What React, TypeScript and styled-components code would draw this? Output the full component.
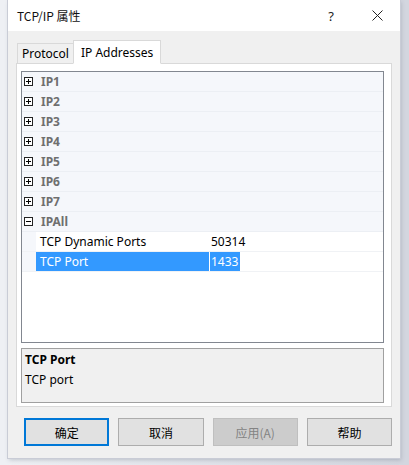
import React from "react";
import styled, { createGlobalStyle } from "styled-components";

const GlobalStyle = createGlobalStyle`
  html, body {
    margin: 0;
    padding: 0;
    background: #e4e6ed;
  }
  body {
    font-family: "Noto Sans", "Noto Sans CJK SC", sans-serif;
    font-size: 12px;
    color: #000;
  }
`;

const Page = styled.div`
  width: 409px;
  height: 465px;
  padding: 0 0 0 8px;
  box-sizing: border-box;
  background: linear-gradient(90deg, #eef0f4 0, #eef0f4 8px, #d3d6df 400px);
  overflow: hidden;
`;

const Window = styled.div`
  width: 392px;
  height: 458px;
  display: flex;
  flex-direction: column;
  background: #f0f0f0;
  box-shadow: 0 0 0 1px #c9ccd6, 1px 2px 4px rgba(60, 70, 90, 0.25);
`;

const TitleBar = styled.div`
  height: 31px;
  flex: none;
  display: flex;
  align-items: center;
  background: #fff;
  padding-left: 9px;
  font-size: 12px;
`;

const Title = styled.div`
  flex: 1;
  font-family: "Noto Sans CJK SC", "Noto Sans", sans-serif;
  color: #111;
`;

const CaptionButton = styled.div<{ $width: number }>`
  width: ${(p) => p.$width}px;
  height: 31px;
  display: flex;
  align-items: center;
  justify-content: center;
  font-size: 13px;
  color: #222;
`;

const Body = styled.div`
  flex: 1;
  display: flex;
  flex-direction: column;
  padding: 9px 8px 0 8px;
`;

const TabStrip = styled.div`
  height: 24px;
  display: flex;
  align-items: flex-end;
  padding-left: 1px;
  margin-bottom: -1px;
  position: relative;
  z-index: 1;
`;

const Tab = styled.div<{ $active?: boolean }>`
  height: ${(p) => (p.$active ? 24 : 21)}px;
  padding: 0 ${(p) => (p.$active ? 7 : 4)}px;
  display: flex;
  align-items: center;
  box-sizing: border-box;
  border: 1px solid #d9d9d9;
  border-bottom: ${(p) => (p.$active ? "1px solid #fff" : "1px solid #d9d9d9")};
  background: ${(p) => (p.$active ? "#fff" : "#f0f0f0")};
  margin-left: ${(p) => (p.$active ? "-1px" : "0")};
  color: #000;
`;

const Panel = styled.div`
  height: 344px;
  box-sizing: border-box;
  border: 1px solid #d9d9d9;
  background: #fff;
  padding: 7px 7px 3px 4px;
  display: flex;
  flex-direction: column;
`;

const Grid = styled.div`
  height: 272px;
  box-sizing: border-box;
  border: 1px solid #828790;
  background: #fff;
  overflow: hidden;
`;

const CategoryRow = styled.div`
  height: 20px;
  display: flex;
  align-items: center;
  background: #f5f7fb;
  border-bottom: 1px solid #eceff4;
  box-sizing: border-box;
`;

const Expander = styled.div`
  width: 17px;
  padding-left: 2px;
  display: flex;
  align-items: center;
`;

const CategoryName = styled.div`
  font-weight: bold;
  color: #6f6f6f;
  font-size: 12px;
`;

const PropRow = styled.div`
  height: 20px;
  display: flex;
  box-sizing: border-box;
  border-bottom: 1px solid #f0f2f5;
`;

const Indent = styled.div`
  width: 14px;
  background: #f5f7fb;
`;

const LabelCell = styled.div<{ $selected?: boolean }>`
  width: 173px;
  padding-left: 4px;
  box-sizing: border-box;
  display: flex;
  align-items: center;
  background: ${(p) => (p.$selected ? "#3399ff" : "#fff")};
  color: ${(p) => (p.$selected ? "#fff" : "#000")};
`;

const ValueCell = styled.div`
  flex: 1;
  padding-left: 1px;
  display: flex;
  align-items: stretch;
`;

const ValueText = styled.span<{ $selected?: boolean }>`
  display: flex;
  align-items: center;
  padding: 0 2px 0 1px;
  background: ${(p) => (p.$selected ? "#3399ff" : "transparent")};
  color: ${(p) => (p.$selected ? "#fff" : "#000")};
`;

const Description = styled.div`
  margin-top: 5px;
  height: 55px;
  box-sizing: border-box;
  border: 1px solid #a0a0a0;
  background: #f0f0f0;
  padding: 1px 3px;
  line-height: 20px;
`;

const DescTitle = styled.div`
  font-weight: bold;
`;

const ButtonRow = styled.div`
  display: flex;
  gap: 9px;
  padding: 11px 0 0 8px;
`;

const Button = styled.div<{ $default?: boolean; $disabled?: boolean }>`
  width: 86px;
  height: 28px;
  box-sizing: border-box;
  display: flex;
  align-items: center;
  justify-content: center;
  font-family: "Noto Sans CJK SC", "Noto Sans", sans-serif;
  font-size: 12px;
  background: ${(p) => (p.$disabled ? "#cccccc" : "#e1e1e1")};
  color: ${(p) => (p.$disabled ? "#838383" : "#000")};
  border: ${(p) =>
    p.$default ? "2px solid #0078d7" : p.$disabled ? "1px solid #bfbfbf" : "1px solid #adadad"};
`;

const ExpandBox = ({ open }: { open?: boolean }) => (
  <svg width="9" height="9" viewBox="0 0 9 9">
    <rect x="0.5" y="0.5" width="8" height="8" fill="#fff" stroke="#222" />
    <line x1="2" y1="4.5" x2="7" y2="4.5" stroke="#000" />
    {!open && <line x1="4.5" y1="2" x2="4.5" y2="7" stroke="#000" />}
  </svg>
);

const CloseIcon = () => (
  <svg width="11" height="11" viewBox="0 0 11 11">
    <path d="M0.5 0.5 L10.5 10.5 M10.5 0.5 L0.5 10.5" stroke="#222" strokeWidth="1" />
  </svg>
);

const categories = ["IP1", "IP2", "IP3", "IP4", "IP5", "IP6", "IP7"];

const App = () => {
  return (
    <Page>
      <GlobalStyle />
      <Window>
        <TitleBar>
          <Title>TCP/IP 属性</Title>
          <CaptionButton $width={46}>?</CaptionButton>
          <CaptionButton $width={46}>
            <CloseIcon />
          </CaptionButton>
        </TitleBar>
        <Body>
          <TabStrip>
            <Tab>Protocol</Tab>
            <Tab $active>IP Addresses</Tab>
          </TabStrip>
          <Panel>
            <Grid>
              {categories.map((name) => (
                <CategoryRow key={name}>
                  <Expander>
                    <ExpandBox />
                  </Expander>
                  <CategoryName>{name}</CategoryName>
                </CategoryRow>
              ))}
              <CategoryRow>
                <Expander>
                  <ExpandBox open />
                </Expander>
                <CategoryName>IPAll</CategoryName>
              </CategoryRow>
              <PropRow>
                <Indent />
                <LabelCell>TCP Dynamic Ports</LabelCell>
                <ValueCell>
                  <ValueText>50314</ValueText>
                </ValueCell>
              </PropRow>
              <PropRow>
                <Indent />
                <LabelCell $selected>TCP Port</LabelCell>
                <ValueCell>
                  <ValueText $selected>1433</ValueText>
                </ValueCell>
              </PropRow>
            </Grid>
            <Description>
              <DescTitle>TCP Port</DescTitle>
              <div>TCP port</div>
            </Description>
          </Panel>
          <ButtonRow>
            <Button $default>确定</Button>
            <Button>取消</Button>
            <Button $disabled>应用(A)</Button>
            <Button>帮助</Button>
          </ButtonRow>
        </Body>
      </Window>
    </Page>
  );
};

export default App;
